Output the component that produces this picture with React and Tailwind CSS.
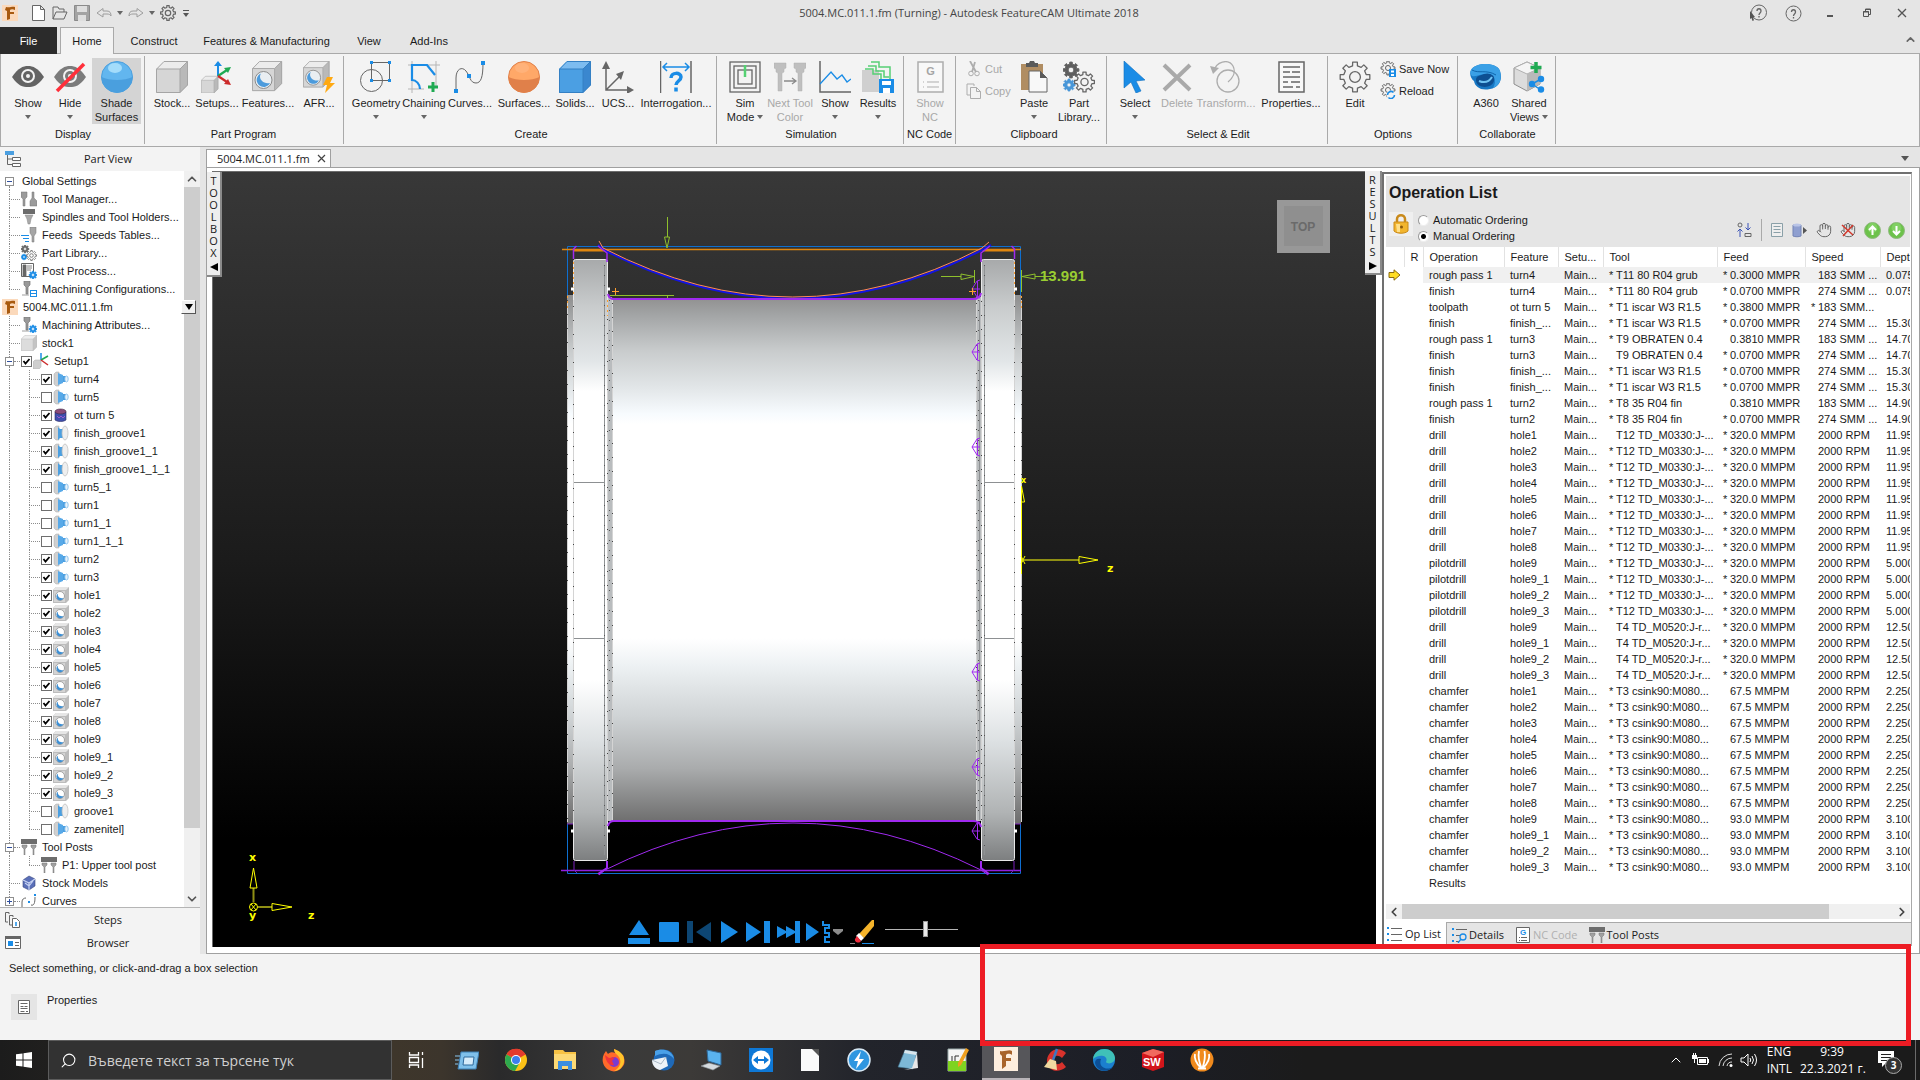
import { ChevronUp, ChevronDown, ChevronLeft, ChevronRight, Search, Hand } from 'lucide-react'
import clsx from 'clsx'

const BLUE = '#1a8ce6'
const GRAY = '#666666'
const PALE = '#adadad'

const Svg = ({ s = 32, w, h, vb, className, children }) => (
  <svg width={w || s} height={h || s} viewBox={vb || `0 0 ${w || s} ${h || s}`} fill="none" className={clsx('block shrink-0', className)}>
    {children}
  </svg>
)

const gear = (cx, cy, outer, inner, teeth = 8) => {
  const pts = []
  for (let i = 0; i < teeth; i++) {
    const a = (i / teeth) * Math.PI * 2 - Math.PI / 2
    const t = Math.PI / teeth
    const corners = [[-0.55, inner], [-0.4, outer], [0.4, outer], [0.55, inner]]
    corners.forEach(([k, r]) => pts.push(`${(cx + Math.cos(a + k * t) * r).toFixed(2)},${(cy + Math.sin(a + k * t) * r).toFixed(2)}`))
  }
  return `M${pts.join('L')}Z`
}

const Gear = ({ cx, cy, r, stroke = GRAY, fill = 'none', hole = 'none', sw = 1.5 }) => (
  <>
    <path d={gear(cx, cy, r, r * 0.76)} stroke={stroke} fill={fill} strokeWidth={sw} strokeLinejoin="round" />
    <circle cx={cx} cy={cy} r={r * 0.36} stroke={stroke} fill={hole} strokeWidth={sw} />
  </>
)

const Caret = () => <Svg w={6} h={4}><path d="M0 0h6L3 4z" fill="#666" /></Svg>

/* ---------- 32px ribbon icons ---------- */

const cube = (front = '#d6d6d6', top = '#ececec', side = '#b9b9b9', edge = '#a5a5a5') => (
  <>
    <path d="M0 8L8 0H32L24 8Z" fill={top} />
    <path d="M24 8L32 0V24L24 32Z" fill={side} />
    <rect y="8" width="24" height="24" fill={front} />
    <path d="M.5 8.200L8 .5H31.500V24L24 31.500H.5ZM.5 8H24V31.500M24 8L31.500 .5" stroke={edge} />
  </>
)

const EyeShape = ({ color }) => (
  <>
    <path d="M0 16C6 7 11 5 16 5s10 2 16 11c-6 9-11 10-16 10S6 25 0 16Z" fill={color} />
    <circle cx="16" cy="15" r="7" fill="#f3f3f3" />
    <circle cx="16" cy="15" r="5" fill={color} />
    <circle cx="16" cy="15" r="2" fill="#f3f3f3" />
  </>
)

const Sphere = ({ base, light, dark }) => (
  <Svg>
    <circle cx="16" cy="16" r="15.500" fill={base} stroke={dark} />
    <path d="M.5 16a15.500 15.500 0 0 0 31 0c-8 4-23 4-31 0Z" fill={dark} />
    <ellipse cx="14" cy="7" rx="7" ry="5" fill={light} />
  </Svg>
)

const HoleCube = () => (
  <>
    <g transform="scale(.94)">{cube()}</g>
    <circle cx="11.500" cy="19" r="8.500" fill="#e9eef2" stroke="#8b8b8b" />
    <path d="M9 12.500c-3 4 1 11 9 9.500a7 7 0 1 1-9-9.500Z" fill="#4c9bdc" />
  </>
)

const Page = ({ color, children }) => (
  <>
    <rect x="4" y="1" width="25" height="30" stroke={color} strokeWidth="1.500" fill="#f8f8f8" />
    {children}
  </>
)

const Tool = ({ x, color }) => (
  <path d={`M${x} 2h12v5l-2 1v3l-2 1v18h-4V12l-2-1V8l-2-1z`} fill={color} stroke="#b0b0b0" strokeWidth=".5" />
)

const icons = {
  eye: <Svg><EyeShape color="#636363" /></Svg>,
  hide: <Svg><EyeShape color="#7b7b7b" /><path d="M30 3L3 30" stroke="#ff2f3a" strokeWidth="3.500" /></Svg>,
  shade: <Sphere base="#62b6ef" light="#a3dcfb" dark="#4a9fde" />,
  stock: <Svg>{cube()}</Svg>,
  setups: (
    <Svg>
      <g transform="translate(0 15) scale(.54)">{cube()}</g>
      <path d="M17 15V3" stroke={BLUE} strokeWidth="2" />
      <path d="M17 15l9-6" stroke="#1faa52" strokeWidth="2.200" />
      <path d="M17 15l9 6" stroke="#cc2b2b" strokeWidth="2.200" />
      <path d="M13 5l4-5 4 5z" fill={BLUE} />
      <path d="M30 6l-7 1 4 5z" fill="#1faa52" />
      <path d="M30 24l-7-1 4-5z" fill="#cc2b2b" />
    </Svg>
  ),
  features: <Svg><HoleCube /></Svg>,
  afr: <Svg><g transform="scale(.88)"><HoleCube /></g><path d="M24 16h6l-3 6h5L22 32l2-8h-4z" fill="#ffa912" /></Svg>,
  geometry: (
    <Svg>
      <circle cx="11.500" cy="19.500" r="11" stroke={GRAY} />
      <path d="M11.500 1.500H29.500V19.500H11.500Z" stroke={GRAY} />
      {[[10, 0], [28, 0], [28, 18], [10, 18]].map(([x, y]) => <rect key={`${x}-${y}`} x={x} y={y} width="3" height="3" fill={BLUE} />)}
    </Svg>
  ),
  chaining: (
    <Svg>
      <path d="M0 4h32M4 0v32M0 28h16M28 0v26" stroke="#b5b5b5" />
      <path d="M12 28c0-5-4-9-8-9V4h15l8 10" stroke={BLUE} strokeWidth="2.200" />
      <path d="M25 21v10M20 26h10" stroke="#1faa52" strokeWidth="3" />
    </Svg>
  ),
  curves: (
    <Svg>
      <path d="M2 30V17C2 8 8 5 12 10s4 12 10 12c5 0 7-6 7-20" stroke={GRAY} />
      <rect x="0" y="28" width="4" height="4" fill={BLUE} />
      <rect x="13" y="13" width="4" height="4" fill={BLUE} />
      <rect x="27" y="0" width="4" height="4" fill={BLUE} />
    </Svg>
  ),
  surfaces: <Sphere base="#ffa868" light="#ffb27a" dark="#e0804a" />,
  solids: <Svg>{cube('#4b9fe3', '#7dbcf0', '#3a87cf', '#3480c4')}</Svg>,
  ucs: (
    <Svg>
      <path d="M4 4v25h25M4 29L19 14" stroke={GRAY} strokeWidth="1.500" />
      <path d="M0 8l4-8 4 8zM25 25l7 4-7 4zM22 10l-8 3 5 6z" fill={GRAY} />
    </Svg>
  ),
  interrogation: (
    <Svg>
      <path d="M.5 0v32M31 0v32" stroke={GRAY} strokeWidth="1.500" />
      <path d="M4 6h24M7 2L3 6l4 4M25 2l4 4-4 4" stroke={BLUE} strokeWidth="1.500" />
      <path d="M11 17c0-6 10-6 10-1 0 4-5 4-5 8M16 26.500v4" stroke={BLUE} strokeWidth="3.500" />
    </Svg>
  ),
  sim: (
    <Svg>
      {[[1, 30], [5, 22], [9, 14]].map(([o, d]) => <rect key={o} x={o} y={o} width={d} height={d} stroke={GRAY} strokeWidth="1.300" />)}
      <path d="M16 4v12" stroke="#55d173" strokeWidth="2.500" />
    </Svg>
  ),
  nextTool: <Svg><Tool x={0} color="#bfbfbf" /><Tool x={20} color="#bfbfbf" /><path d="M10 20h11M18 17l4 3-4 3" stroke="#8b8b8b" strokeWidth="1.300" /></Svg>,
  chart: <Svg><path d="M1 0v31h31" stroke={GRAY} strokeWidth="1.500" /><path d="M1 23L12 11l6 7 5-4 5 7 4-3" stroke={BLUE} strokeWidth="1.300" /></Svg>,
  results: (
    <Svg>
      <rect y="9" width="17" height="22" fill="#cfcfcf" />
      <path d="M3 8h8v5h8v6h5M6 5h8v5h8v6h5M9 1h8v5h11v13M12 13h5" stroke="#57cf76" strokeWidth="1.500" />
      <rect x="17" y="18" width="15" height="14" fill={BLUE} />
      <path d="M20 20h9v4h-9zM21 27h7v5h-7z" fill="#fff" />
    </Svg>
  ),
  nc: (
    <Svg>
      <Page color={PALE}>
        <text x="16.500" y="14" textAnchor="middle" fontSize="11" fontWeight="700" fontFamily="Liberation Sans" fill="#a5a5a5">G</text>
        <path d="M9 21h1M13 21h12M9 26h1M13 26h12" stroke={PALE} />
      </Page>
    </Svg>
  ),
  paste: (
    <Svg w={28} h={32}>
      <path d="M1 3h22v10h-3v16H1z" fill="#b08d62" />
      <path d="M6 4V2h3l1-2h4l1 2h3v4H6z" fill="#5a5a5a" />
      <path d="M9 10h11l7 7v14H9z" fill="#f8f8f8" stroke={GRAY} />
      <path d="M20 10l7 7h-7z" fill="#5a5a5a" />
    </Svg>
  ),
  library: (
    <Svg>
      <Gear cx={8} cy={9} r={8} fill="#5e5e5e" hole="#f3f3f3" sw={1} />
      <Gear cx={6} cy={24} r={6} stroke="#4796d8" fill="#4796d8" hole="#f3f3f3" sw={1} />
      <Gear cx={21.500} cy={21} r={10} sw={1.300} />
    </Svg>
  ),
  select: <Svg><path d="M5 0l21 19-9 1 5 10-5 2-5-11-7 6z" fill={BLUE} stroke="#0f6fc0" strokeWidth=".6" /></Svg>,
  delete: <Svg><path d="M3 4l26 25M29 4L3 29" stroke="#a9a9a9" strokeWidth="4" /></Svg>,
  transform: (
    <Svg>
      <circle cx="18" cy="20" r="11" stroke={PALE} strokeWidth="1.300" />
      <path d="M4 10C6 1 18-3 23 5c3 6 0 12-5 16" stroke={PALE} strokeWidth="1.300" />
      <path d="M0 5l9 2-6 6z" fill={PALE} />
    </Svg>
  ),
  properties: <Svg><Page color={GRAY}><path d="M8 6h17M8 11h7M17 11h8M8 16h17M8 21h5M16 21h9M8 26h10M21 26h4" stroke={GRAY} strokeWidth="1.300" /></Page></Svg>,
  edit: <Svg><Gear cx={16} cy={16} r={15} sw={1.300} /></Svg>,
  a360: (
    <Svg>
      <path d="M1 9C6 1 27 1 30 10c3 9-1 16-10 18C11 30 5 26 4 20 1 18-1 13 1 9Z" fill="#1878c4" />
      <path d="M1 9C6 1 27 1 30 10c2 8 0 14-7 17 5-8 0-15-9-14-6 1-9 3-12 2-2-2-2-4-1-6Z" fill="#3aa0e6" />
      <path d="M6 19c0 9 16 9 18 1 2-6-5-9-10-7-5 2-8 2-8 6Z" fill="#0d4f92" />
      <path d="M9 20c5 2 10 1 13-4" stroke="#6fc2f2" strokeWidth="2" />
      <path d="M2 9c7 4 14-1 24 5" stroke="#0f65ac" />
    </Svg>
  ),
  shared: (
    <Svg>
      <path d="M1 7l13-6 13 6v16l-13 7L1 23z" fill="#dcdcdc" stroke="#8d8d8d" />
      <path d="M1 7l13 6 13-6-13-6z" fill="#f5f5f5" stroke="#b0b0b0" />
      <path d="M14 13v17l13-7V7z" fill="#b9b9b9" />
      <path d="M23 1v11M17.500 6.500h11" stroke="#1faa52" strokeWidth="3.500" />
      <path d="M28 18l-9 5 9 6" stroke={BLUE} strokeWidth="1.500" />
      <circle cx="28" cy="18" r="3.200" fill={BLUE} /><circle cx="19" cy="23" r="3.200" fill={BLUE} /><circle cx="28" cy="28.500" r="3.200" fill={BLUE} />
    </Svg>
  ),
  cut: <Svg s={16}><path d="M4 0l6 11M9 1L6 11" stroke={PALE} strokeWidth="1.800" /><circle cx="5" cy="12.500" r="2.300" stroke={PALE} /><circle cx="11" cy="12.500" r="2.300" stroke={PALE} /></Svg>,
  copy: <Svg s={16}><path d="M8 3V1H1v11h3" stroke={PALE} /><path d="M4.500 4.500h6l4 4v7h-10zM10.500 4.500v4h4" stroke={PALE} /></Svg>,
  saveNow: <Svg s={16}><Gear cx={8} cy={7} r={7} sw={1} /><rect x="9" y="8" width="7" height="8" fill={BLUE} /><path d="M11 9.500h3v2h-3zM11 13h3v2h-3z" fill="#fff" /></Svg>,
  reload: <Svg s={16}><Gear cx={8} cy={7} r={7} sw={1} /><circle cx="11" cy="12" r="4.500" fill="#f3f3f3" /><path d="M7.500 12a3.500 3.500 0 0 1 6-2.500M14.500 12a3.500 3.500 0 0 1-6 2.500" stroke={BLUE} strokeWidth="1.600" /></Svg>
}

/* ---------- 16px tree icons ---------- */

const mini = {
  app: <Svg s={16}><rect width="16" height="16" fill="#fbd9bb" /><path d="M4 2c4 1 6-1 9 0v3c-2-1-4-1-5 0v2h4v2H8v5l-3 1V6L3 5z" fill="#a85a10" /></Svg>,
  tools: <Svg s={16}><path d="M0 1h6v5L4 8v7H2V8L0 6zM11 1h2v6l3 3v5H9v-5l2-3z" fill="#9b9b9b" stroke="#777" strokeWidth=".5" /></Svg>,
  spindle: <Svg s={16}><path d="M2 0h12v5H2z" fill="#6b6b6b" /><path d="M4 6h8l-2 4-1 5H7l-1-5z" fill="#a9a9a9" stroke="#888" strokeWidth=".5" /></Svg>,
  feeds: <Svg s={16}><path d="M0 8.500h8M2 11.500h6M4 14.500h4" stroke={BLUE} /><path d="M9 0h6v6l-2 3v6h-2V9L9 6z" fill="#a5a5a5" stroke="#777" strokeWidth=".5" /></Svg>,
  gears: <Svg s={16}><Gear cx={4} cy={4} r={4} fill="#666" hole="#fff" sw={0.6} /><Gear cx={3} cy={12} r={3} stroke={BLUE} fill={BLUE} hole="#fff" sw={0.5} /><Gear cx={10.500} cy={10.500} r={5} sw={0.8} /></Svg>,
  post: <Svg s={16}><path d="M.5 .5h12v13H.5z" stroke={GRAY} /><path d="M2 2h3v11H2zM6 3h5M6 5h5M6 7h4" fill={GRAY} stroke={GRAY} strokeWidth=".8" /><Gear cx={12} cy={12} r={4} stroke={BLUE} fill={BLUE} hole="#fff" sw={0.6} /></Svg>,
  config: <Svg s={16}><path d="M3 0h6v4L7 6v7H5V6L3 4zM1 14h7" fill="#999" stroke="#777" strokeWidth=".7" /><rect x="9.500" y="9.500" width="6" height="6" fill="#fff" stroke={BLUE} /><path d="M10 12.500h5" stroke={BLUE} /></Svg>,
  attrs: <Svg s={16}><path d="M3 0h6v4L7 6v7H5V6L3 4zM1 14h7" fill="#999" stroke="#777" strokeWidth=".7" /><Gear cx={12} cy={12} r={4} stroke={BLUE} fill={BLUE} hole="#fff" sw={0.6} /></Svg>,
  stock: <Svg s={16} vb="0 0 32 32">{cube('#dcdcdc', '#eeeeee', '#c4c4c4', '#bcbcbc')}</Svg>,
  setup: <Svg s={16}><path d="M0 9l2-2h6v7l-2 2H0z" fill="#cfcfcf" stroke="#aaa" strokeWidth=".5" /><path d="M8 7V0" stroke={BLUE} strokeWidth="1.500" /><path d="M8 7l7-4" stroke="#1faa52" strokeWidth="1.500" /><path d="M8 7l7 5" stroke="#cc2b2b" strokeWidth="1.500" /></Svg>,
  turn: <Svg s={16}><path d="M3 1h3v14H3L1 13V3z" fill="#d0d0d0" stroke="#aaa" strokeWidth=".5" /><path d="M5 2l5 2v8l-5 2z" fill="#58a9e8" /><path d="M10 5h3v6h-3z" fill="#4b9fe0" /><ellipse cx="13.500" cy="8" rx="1.700" ry="3" fill="#e8f3fb" stroke="#7bb9ea" strokeWidth=".8" /></Svg>,
  toolpath: <Svg s={16}><path d="M2 5h11v8c-3 2-8 2-11 0z" fill="#3f4fae" stroke="#2d2d60" strokeWidth=".6" /><ellipse cx="7.500" cy="4.500" rx="5.500" ry="2.500" fill="#8a4a78" stroke="#3b2440" strokeWidth=".6" /><path d="M4 9l2 2 2-2 2 2 2-2" stroke="#9a5bd0" /></Svg>,
  groove: <Svg s={16}><path d="M3 1h3v14H3L1 13V3z" fill="#d0d0d0" stroke="#aaa" strokeWidth=".5" /><path d="M5 2l2 2h4v9H7l-2 2z" fill="#4b9fe0" /><ellipse cx="12" cy="8" rx="3" ry="7" fill="#efefef" stroke="#bbb" strokeWidth=".7" /></Svg>,
  hole: <Svg s={16}><path d="M0 3l3-3h13v13l-3 3H0z" fill="#bcbcbc" /><path d="M0 3l3-3h13l-3 3z" fill="#e6e6e6" /><path d="M1 4h11v11H1z" fill="#d4d4d4" /><circle cx="7" cy="9" r="4.500" fill="#fff" stroke="#8f8f8f" strokeWidth=".8" /><path d="M5 6.500c-1 3 2 5.500 5.500 4.500A3.700 3.700 0 1 1 5 6.500z" fill="#3d8fd3" /></Svg>,
  posts: <Svg s={16}><path d="M0 0h16v5H0z" fill="#6d6d6d" /><path d="M1 6h5v2L4 10v6H3v-6L1 8zM10 6h5v2l-2 2v6h-1v-6l-2-2z" fill="#a0a0a0" stroke="#777" strokeWidth=".5" /></Svg>,
  models: <Svg s={16}><path d="M2 5l6-4 6 3v7l-6 4-6-3z" fill="#5a6fb8" stroke="#37457d" strokeWidth=".6" /><path d="M2 5l6 3 6-4M4 8l4 3 4-5M8 8v7" stroke="#c7d2f2" strokeWidth="1.200" /></Svg>,
  curves: <Svg s={16}><path d="M1 15V9c0-3 2-4 4-4M10 12c3 1 4-2 4-8" stroke={GRAY} /><path d="M7 8h2v2H7zM13 1h2v2h-2z" fill={BLUE} /></Svg>,
  partView: <Svg s={16}><path d="M0 0h9v4H0z" fill="#4b9fe0" /><path d="M2.500 4v9.500H7M2.500 8H7" stroke={GRAY} /><path d="M7.500 6.500h8v3h-8zM7.500 12.500h8v3h-8z" fill="#fff" stroke={GRAY} /></Svg>,
  steps: <Svg s={16}><path d="M4 2V.5H.5V10H3M8 5V3.500H4.500V13H7" stroke={GRAY} /><path d="M7.500 6.500h4l3 3v6h-7z" fill="#fff" stroke={GRAY} /><path d="M11 10v4" stroke={BLUE} strokeWidth="1.500" /></Svg>,
  browser: <Svg s={16}><path d="M.5 1.500h15v12H.5z" fill="#fff" stroke={GRAY} /><path d="M0 1h16v3H0z" fill={GRAY} /><path d="M3 6h5v5H3z" fill={BLUE} /><path d="M10 7.500h4M10 10.500h4" stroke={GRAY} /></Svg>,
  opList: <Svg s={16}><path d="M5 2.500h11M5 8.500h11M5 14.500h11" stroke={GRAY} /><path d="M1 1h2v2H1zM1 7h2v2H1zM1 13h2v2H1z" fill={BLUE} /></Svg>,
  details: <Svg s={16}><path d="M5 2.500h11M5 8.500h5M5 14.500h3" stroke={GRAY} /><path d="M1 1h2v2H1zM1 7h2v2H1zM1 13h2v2H1z" fill={BLUE} /><circle cx="12" cy="10" r="3" stroke={BLUE} strokeWidth="1.300" /><path d="M10 12l-3 4" stroke={BLUE} strokeWidth="1.300" /></Svg>,
  nc: <Svg s={16}><path d="M1.500 .5h13v15h-13z" fill="#fff" stroke={GRAY} /><text x="8" y="8" textAnchor="middle" fontSize="8" fontWeight="700" fontFamily="Liberation Sans" fill={BLUE}>G</text><path d="M4 10.500h1M6 10.500h6M4 13.500h1M6 13.500h6" stroke={GRAY} /></Svg>,
  props: <Svg s={16}><path d="M2.500 1.500h11v13h-11z" fill="#fff" stroke={GRAY} /><path d="M4.500 4.500h7M4.500 7.500h3M8.500 7.500h3M4.500 9.500h7M4.500 12.500h4M10 12.500h2" stroke={GRAY} /></Svg>
}

/* ---------- title bar and ribbon ---------- */

const quick = [
  ['New', 'w-5', <Svg key="n" w={13} h={16}><path d="M.5 .5h8l4 4v11H.5zM8.500 .5v4h4" fill="#fff" stroke={GRAY} /></Svg>],
  ['Open', 'w-6', <Svg key="o" s={16}><path d="M1 14V2h5l1 2h5v3M1 14l3-7h11l-3 7z" stroke={GRAY} /></Svg>],
  ['Save', 'w-5', <Svg key="s" s={16}><path d="M.5 .5h15v15H.5z" fill="#a3a3a3" stroke="#8a8a8a" /><path d="M3 1h10v6H3zM4 10h8v6H4z" fill="#dedede" /></Svg>],
  ['Undo', 'w-6', <Svg key="u" s={16}><path d="M1 8l6-4.500v2.500h4c3 0 4 2 4 5-1-1.500-2-2-4-2H7v3z" stroke="#9d9d9d" /></Svg>],
  ['Undo history', 'w-2', <Caret key="uc" />],
  ['Redo', 'w-6', <Svg key="r" s={16}><path d="M15 8L9 3.500V6H5c-3 0-4 2-4 5 1-1.500 2-2 4-2h4v3z" stroke="#9d9d9d" /></Svg>],
  ['Redo history', 'w-2', <Caret key="rc" />],
  ['Options', 'w-6', <Svg key="g" s={16}><Gear cx={8} cy={8} r={7.500} sw={1.200} /></Svg>],
  ['Customize', 'w-3', <Svg key="c" w={6} h={7}><path d="M0 .5h6" stroke="#555" /><path d="M0 3h6L3 7z" fill="#555" /></Svg>]
]

const tabs = [
  ['Construct', 'w-20'],
  ['Features & Manufacturing', 'w-[145px]'],
  ['View', 'w-[60px]'],
  ['Add-Ins', 'w-[60px]']
]

const groups = [
  { name: 'Display', w: 'w-[144px] pl-[5px]', items: [
    ['Show', 'w-11', 'eye', { caret: true }],
    ['Hide', 'w-10', 'hide', { caret: true }],
    ['Shade Surfaces', 'w-[49px] ml-[2px] bg-[#d4d4d4]', 'shade']
  ] },
  { name: 'Part Program', w: 'w-[199px] pl-[3px]', items: [
    ['Stock...', 'w-12', 'stock'], ['Setups...', 'w-[42px]', 'setups'], ['Features...', 'w-[60px]', 'features'], ['AFR...', 'w-[42px]', 'afr']
  ] },
  { name: 'Create', w: 'w-[373px] pl-[6px]', items: [
    ['Geometry', 'w-[52px]', 'geometry', { caret: true }],
    ['Chaining', 'w-11', 'chaining', { caret: true }],
    ['Curves...', 'w-12', 'curves'], ['Surfaces...', 'w-[60px]', 'surfaces'], ['Solids...', 'w-[42px]', 'solids'],
    ['UCS...', 'w-11', 'ucs'], ['Interrogation...', 'w-[72px]', 'interrogation']
  ] },
  { name: 'Simulation', w: 'w-[187px] pl-[6px]', items: [
    ['Sim Mode', 'w-11', 'sim', { inline: true }],
    ['Next Tool Color', 'w-[46px]', 'nextTool', { off: true }],
    ['Show', 'w-11', 'chart', { caret: true }],
    ['Results', 'w-[42px]', 'results', { caret: true }]
  ] },
  { name: 'NC Code', w: 'w-[52px] pl-[3px]', items: [['Show NC', 'w-[46px]', 'nc', { off: true }]] },
  { name: 'Clipboard', w: 'w-[151px] pl-[10px]', small: [['Cut', 'cut', true], ['Copy', 'copy', true]], smallW: 'w-12', items: [
    ['Paste', 'w-10', 'paste', { caret: true }], ['Part Library...', 'w-[50px]', 'library']
  ] },
  { name: 'Select & Edit', w: 'w-[221px] pl-[6px]', items: [
    ['Select', 'w-11', 'select', { caret: true }], ['Delete', 'w-10', 'delete', { off: true }],
    ['Transform...', 'w-[58px]', 'transform', { off: true }], ['Properties...', 'w-[72px]', 'properties']
  ] },
  { name: 'Options', w: 'w-[130px] pl-[5px]', items: [['Edit', 'w-11', 'edit']], after: [['Save Now', 'saveNow'], ['Reload', 'reload']] },
  { name: 'Collaborate', w: 'w-[98px] pl-[6px]', items: [['A360', 'w-11', 'a360'], ['Shared Views', 'w-[42px]', 'shared', { inline: true }]] }
]

function RibbonButton({ label, w, icon, opt = {} }) {
  const words = label.split(' ')
  const last = words.length > 1 ? words.pop() : null
  return (
    <button disabled={opt.off} className={clsx('flex h-[66px] shrink-0 flex-col items-center pt-[3px]', w, opt.off ? 'text-[#a8a8a8]' : 'text-[#1e1e1e]')}>
      {icons[icon]}
      <span className="mt-[3px] flex h-[14px] items-center whitespace-nowrap">{words.join(' ')}</span>
      <span className="flex h-[14px] items-center gap-[3px] whitespace-nowrap">
        {last}
        {(opt.caret || opt.inline) && <Caret />}
      </span>
    </button>
  )
}

function SmallButtons({ list, className }) {
  return (
    <div className={clsx('flex flex-col gap-[6px] pt-[3px]', className)}>
      {list.map(([label, icon, off]) => (
        <button key={label} disabled={off} className={clsx('flex h-4 items-center gap-[3px] whitespace-nowrap', off ? 'text-[#a8a8a8]' : 'text-[#1e1e1e]')}>
          {icons[icon]}
          {label}
        </button>
      ))}
    </div>
  )
}

function TitleBar() {
  return (
    <header className="flex h-[26px] shrink-0 items-center justify-between">
      <div className="flex flex-1 items-center">
        <span className="mr-[10px] ml-[2px]">{mini.app}</span>
        {quick.map(([label, w, icon]) => (
          <button key={label} aria-label={label} className={clsx('flex items-center justify-center', w)}>{icon}</button>
        ))}
      </div>
      <h1 className="ml-[18px] font-['Open_Sans','Noto_Sans',sans-serif] text-[11px] text-[#444]">5004.MC.011.1.fm (Turning) - Autodesk FeatureCAM Ultimate 2018</h1>
      <div className="flex flex-1 items-center justify-end text-[#666]">
        <button aria-label="Context help" className="w-9">
          <Svg w={18} h={18}><circle cx="10" cy="8.500" r="7.500" stroke={GRAY} /><path d="M8 7c0-3 4-3 4 0 0 2-2 2-2 4M10 12v1.500" stroke={GRAY} strokeWidth="1.300" /><path d="M1 7l5 6-2 .3 1 3-1.500.6-1-3L1 15z" fill="#555" /></Svg>
        </button>
        <button aria-label="Help" className="w-10">
          <Svg s={17}><circle cx="8.500" cy="8.500" r="7.500" stroke={GRAY} /><path d="M6.500 7c0-3 4-3 4 0 0 2-2 2-2 4M8.500 12v1.500" stroke={GRAY} strokeWidth="1.300" /></Svg>
        </button>
        <button aria-label="Minimize" className="w-9"><Svg s={12}><path d="M2 9h6" stroke="#555" strokeWidth="2" /></Svg></button>
        <button aria-label="Restore" className="w-9"><Svg s={12}><path d="M2.500 4.500h5v5h-5zM4.500 4V2h5v5.500H8" stroke="#555" /><path d="M2 5h6M4 2.500h6" stroke="#555" /></Svg></button>
        <button aria-label="Close" className="w-[23px]"><Svg s={12}><path d="M1 2l8 8M9 2l-8 8" stroke="#555" strokeWidth="1.300" /></Svg></button>
      </div>
    </header>
  )
}

function Ribbon() {
  return (
    <>
      <nav className="relative z-10 -mb-px flex h-7 shrink-0 items-end">
        <button className="mr-[3px] h-[27px] w-[57px] bg-[#2b2b2b] text-white">File</button>
        <button className="h-[27px] w-[54px] border border-b-0 border-[#a9a9a9] bg-[#f3f3f3]">Home</button>
        {tabs.map(([label, w]) => (
          <button key={label} className={clsx('h-[27px] whitespace-nowrap', w)}>{label}</button>
        ))}
        <button aria-label="Collapse ribbon" className="mr-[3px] mb-2 ml-auto"><ChevronUp size={13} strokeWidth={3} color="#666" /></button>
      </nav>
      <section className="flex h-[94px] shrink-0 border border-[#a9a9a9] bg-[#f3f3f3] pt-[2px]">
        {groups.map((g) => (
          <div key={g.name} className={clsx('flex h-[88px] shrink-0 flex-col border-r border-[#a9a9a9] pt-[2px]', g.w)}>
            <div className="flex">
              {g.small && <SmallButtons list={g.small} className={g.smallW} />}
              {g.items.map(([label, w, icon, opt]) => <RibbonButton key={label} label={label} w={w} icon={icon} opt={opt} />)}
              {g.after && <SmallButtons list={g.after} className="ml-[3px]" />}
            </div>
            <div className="pt-[3px] pr-1 text-center whitespace-nowrap">{g.name}</div>
          </div>
        ))}
      </section>
    </>
  )
}

/* ---------- part view ---------- */

const child = (text, icon, on) => ({ text, icon, on, level: 2 })
const tree = [
  { text: 'Global Settings', level: 0, open: true },
  { text: 'Tool Manager...', icon: 'tools', level: 1 },
  { text: 'Spindles and Tool Holders...', icon: 'spindle', level: 1 },
  { text: 'Feeds  Speeds Tables...', icon: 'feeds', level: 1 },
  { text: 'Part Library...', icon: 'gears', level: 1 },
  { text: 'Post Process...', icon: 'post', level: 1 },
  { text: 'Machining Configurations...', icon: 'config', level: 1, last: true },
  { text: '5004.MC.011.1.fm', icon: 'app', root: true },
  { text: 'Machining Attributes...', icon: 'attrs', level: 1 },
  { text: 'stock1', icon: 'stock', level: 1 },
  { text: 'Setup1', icon: 'setup', level: 1, open: true, on: true },
  child('turn4', 'turn', true),
  child('turn5', 'turn', false),
  child('ot turn 5', 'toolpath', true),
  child('finish_groove1', 'groove', true),
  child('finish_groove1_1', 'groove', true),
  child('finish_groove1_1_1', 'groove', true),
  child('turn5_1', 'turn', false),
  child('turn1', 'turn', false),
  child('turn1_1', 'turn', false),
  child('turn1_1_1', 'turn', false),
  child('turn2', 'turn', true),
  child('turn3', 'turn', true),
  ...['hole1', 'hole2', 'hole3', 'hole4', 'hole5', 'hole6', 'hole7', 'hole8', 'hole9', 'hole9_1', 'hole9_2', 'hole9_3'].map((n) => child(n, 'hole', true)),
  child('groove1', 'groove', false),
  { ...child('zamenitel]', 'turn', false), last: true },
  { text: 'Tool Posts', icon: 'posts', level: 1, open: true },
  { text: 'P1: Upper tool post', icon: 'posts', level: 2, last: true },
  { text: 'Stock Models', icon: 'models', level: 1 },
  { text: 'Curves', icon: 'curves', level: 1, open: false }
]

const Guide = ({ branch, last }) => (
  <span className="ml-[9px] flex h-full w-[11px] shrink-0 flex-col">
    <span className="h-[9px] w-full border-l border-dotted border-[#8c8c8c]" />
    <span className={clsx('h-[9px] w-full', !last && 'border-l border-dotted border-[#8c8c8c]', branch && 'border-t border-t-[#8c8c8c] [border-top-style:dotted]')} />
  </span>
)

const Expander = ({ open, first, label }) => (
  <span className="flex h-full w-5 shrink-0">
    <span className="ml-[5px] flex h-full w-[9px] flex-col items-center">
      <span className={clsx('w-px flex-1', !first && 'border-l border-dotted border-[#8c8c8c]')} />
      <button aria-label={`Toggle ${label}`} className="flex size-[9px] items-center justify-center border border-[#8f8f8f] bg-white">
        <svg width="5" height="5" className="block"><path d={open ? 'M0 2.500h5' : 'M0 2.500h5M2.500 0v5'} stroke="#2f4f9e" /></svg>
      </button>
      <span className={clsx('w-px flex-1', open && 'border-l border-dotted border-[#8c8c8c]')} />
    </span>
    {!first && <span className="mt-[9px] w-[6px] border-t border-dotted border-[#8c8c8c]" />}
  </span>
)

const Check = ({ id, on }) => (
  <span className="mr-px grid shrink-0">
    <input id={id} type="checkbox" defaultChecked={on} className="peer col-start-1 row-start-1 size-[11px] appearance-none border border-[#6f6f6f] bg-white" />
    <svg width="11" height="11" className="pointer-events-none invisible col-start-1 row-start-1 peer-checked:visible"><path d="M2.500 5l2 2.500L8.500 3" stroke="#000" strokeWidth="1.800" fill="none" /></svg>
  </span>
)

function TreeRow({ row, index }) {
  const { text, icon, on, level, open, last, root } = row
  const id = `node-${index}`
  const Text = on === undefined ? 'span' : 'label'
  return (
    <li className="flex h-[18px] shrink-0 items-center whitespace-pre">
      {level === 2 && <Guide />}
      {open !== undefined ? <Expander open={open} first={level === 0} label={text} /> : root ? <span className="w-[2px]" /> : <Guide branch last={last} />}
      {on !== undefined && <span className="ml-px"><Check id={id} on={on} /></span>}
      {icon && <span className={on === undefined && !root ? 'ml-px' : ''}>{mini[icon]}</span>}
      <Text htmlFor={on === undefined ? undefined : id} className={clsx(level === 0 ? 'ml-[2px]' : 'ml-[5px]')}>{text}</Text>
    </li>
  )
}

function PartView() {
  return (
    <aside className="flex w-[200px] shrink-0 flex-col bg-[#f3f3f3]">
      <div className="flex h-6 shrink-0 items-center px-[5px] font-['Open_Sans',sans-serif]">
        {mini.partView}
        <h2 className="flex-1 text-center">Part View</h2>
      </div>
      <div className="relative flex min-h-0 flex-1 overflow-hidden border-b border-[#b5b5b5] bg-white pt-px">
        <ul className="flex-1">
          {tree.map((row, i) => <TreeRow key={i} row={row} index={i} />)}
        </ul>
        <div className="absolute top-0 right-0 flex h-full w-4 flex-col items-center bg-[#f0f0f0]">
          <ChevronUp size={14} strokeWidth={3} color="#555" className="my-px shrink-0" />
          <div className="flex w-full flex-1 flex-col">
            <div className="flex-[641] bg-[#cdcdcd]" />
            <div className="flex-[63]" />
          </div>
          <ChevronDown size={14} strokeWidth={3} color="#555" className="my-px shrink-0" />
        </div>
        {/* reaches over the scroll bar */}
        <button aria-label="File menu" className="absolute top-[129px] right-[4px] flex h-[14px] w-[15px] items-center justify-center border border-white border-r-[#555] border-b-[#555] bg-[#f0f0f0]">
          <Svg w={8} h={6}><path d="M0 0h8L4 6z" fill="#000" /></Svg>
        </button>
      </div>
      {[['Steps', 'steps'], ['Browser', 'browser']].map(([label, icon]) => (
        <button key={label} className="flex h-[23px] shrink-0 items-center px-[5px] font-['Open_Sans',sans-serif]">
          {mini[icon]}
          <span className="flex-1">{label}</span>
        </button>
      ))}
    </aside>
  )
}

/* ---------- 3D canvas ---------- */

const SIDE_X = [567, 573, 607, 612, 976, 981, 1014, 1021]

function Scene() {
  return (
    <svg viewBox="213 172 1163 775" fill="none" className="block h-full w-full" fontFamily="DejaVu Sans, sans-serif" fontWeight="700">
      <defs>
        <linearGradient id="body" x1="0" y1="299" x2="0" y2="821" gradientUnits="userSpaceOnUse">
          <stop offset="0" stopColor="#929292" /><stop offset=".03" stopColor="#a2a4a5" /><stop offset=".1" stopColor="#c9cccd" />
          <stop offset=".17" stopColor="#e2e6e8" /><stop offset=".22" stopColor="#f7fbfe" /><stop offset=".24" stopColor="#fff" />
          <stop offset=".65" stopColor="#fff" /><stop offset=".7" stopColor="#eef2f4" /><stop offset=".8" stopColor="#cfd3d5" />
          <stop offset=".9" stopColor="#a9abac" /><stop offset="1" stopColor="#6f6f6f" />
        </linearGradient>
        <linearGradient id="flange" x1="0" y1="259" x2="0" y2="861" gradientUnits="userSpaceOnUse">
          <stop offset="0" stopColor="#a7a9aa" /><stop offset=".08" stopColor="#c9cccd" /><stop offset=".17" stopColor="#e2e6e8" />
          <stop offset=".22" stopColor="#fff" /><stop offset=".7" stopColor="#fff" /><stop offset=".8" stopColor="#dde1e3" />
          <stop offset=".92" stopColor="#b0b3b4" /><stop offset="1" stopColor="#7c7e7f" />
        </linearGradient>
      </defs>

      <rect x="567" y="295" width="7" height="529" fill="url(#body)" />
      <rect x="1014" y="295" width="7" height="529" fill="url(#body)" />
      <rect x="604" y="297" width="8" height="524" fill="#b9bcbe" />
      <rect x="976" y="297" width="8" height="524" fill="#b9bcbe" />
      <rect x="612" y="299" width="364" height="522" fill="url(#body)" />
      <rect x="573.500" y="259.500" width="34" height="601" rx="2" fill="url(#flange)" stroke="#e8e8e8" />
      <rect x="981.500" y="259.500" width="33" height="601" rx="2" fill="url(#flange)" stroke="#e8e8e8" />
      <path d="M574 482.500h31M984 482.500h30M574 638.500h31M984 638.500h30" stroke="#8d9092" />
      <path d="M604.500 265v590M984.500 265v590M607.500 300v520M979.500 300v520" stroke="#8f9294" />
      {SIDE_X.map((x) => <path key={x} d={`M${x}.5 300V822`} stroke="#d4d4d4" />)}
      {SIDE_X.map((x) => <path key={x} d={`M${x}.5 ${300 + (x % 7)}V822`} stroke="#444" strokeDasharray="1 13" />)}
      <path d="M604.500 265V855M609.500 300V820M978.500 300V820M984.500 265V855" stroke="#555" strokeDasharray="1 9" />
      <path d="M573.500 262v34M607.500 300v16M1014.500 262v34M567.500 296v12M1021.500 296v12" stroke="#ffa030" strokeDasharray="2 3" />

      {/* stock boundary */}
      <path d="M567.500 295V246.500H1020.500V295M567.500 824V873.500H1020.500V824" stroke="#0e6fd0" />
      <path d="M562 249.500H1021" stroke="#e0860e" strokeWidth="1.500" />
      <path d="M574 250.500h34M982 250.500h33" stroke="#e0860e" strokeWidth="2" />
      <path d="M561 870.500H1021" stroke="#8f1fe0" strokeWidth="1.500" />

      <path d="M598 245L606 251Q793 346 980 251L991 245" stroke="#1414e0" strokeWidth="2" />
      <path d="M599 241L603 248Q793 346 982 248L989 242" stroke="#ff8a5a" />
      <path d="M599 875L605 870Q793 776 981 870L988 875" stroke="#a02af0" />

      <path d="M573.500 259V249l3-3M607 262V253l-9-7M981 262v-9l9-7M1014.500 259V249l-3-3" stroke="#a02af0" strokeWidth="1.500" />
      <path d="M608 294q1 5 6 5H973q7 0 8-6" stroke="#a02af0" strokeWidth="2" />
      <path d="M607 861v7l-9 6M608 826q1-5 6-5H973q7 0 8 6M981 861v7l8 6" stroke="#a02af0" strokeWidth="2" />
      <path d="M574 861v9l3 3M1014 861v9l-3 3M567 824h6M1015 824h6" stroke="#7a1fb8" />
      {[289, 352, 447, 672, 767, 831].map((y) => (
        <path key={y} d={`M980 ${y - 9}l-3 1-5 8 5 8 3 1M972 ${y}h8M977.500 ${y - 8}v16`} stroke="#a02af0" />
      ))}
      <path d="M612 291.500h7M615.500 288v7M969 291.500h7M972.500 288v7" stroke="#ffa030" />
      <path d="M571 289h3M607 289h3M1014 289h3M571 831h3M607 831h3M1014 831h3" stroke="#fff" strokeWidth="3" />

      {/* dimensions */}
      <g stroke="#8fc02c">
        <path d="M667.500 217V237M664.500 237h5l-2.500 11zM610 295.500H674M667.500 295v3" />
        <path d="M941 276.500h20M961 274l13 2.500-13 3zM974.500 270v13" />
        <path d="M1021.500 270v22M1022 276.500l13-2.500v5zM1035 276.500h16" />
      </g>
      <text x="1040" y="281" fontSize="15" fontFamily="Liberation Sans" fill="#9acd32">13.991</text>

      {/* axes */}
      <g stroke="#ffff00" fontSize="11">
        <path d="M1024 560H1079M253.500 888V902M258 907H272" stroke="#8f8f14" strokeWidth="2" />
        <path d="M1079 556.500l19 3.500-19 3.500zM1021.500 486V574M1021.500 486l3 16h-3M1021 556l4 8M1025 556l-4 8" />
        <path d="M250 888l3.500-20 3.500 20zM272 903.500l20 3.500-20 3.500z" />
        <circle cx="253.500" cy="907" r="4" /><path d="M251 904l5 6M256 904l-5 6" />
        <g fill="#ffff00" stroke="none">
          <text x="1107" y="572">z</text>
          <text x="1021" y="483" fontSize="8">x</text>
          <text x="249" y="861">x</text>
          <text x="249" y="919">y</text>
          <text x="308" y="919">z</text>
        </g>
      </g>

      <g>
        <rect x="1277" y="200" width="53" height="53" fill="#989898" />
        <rect x="1284" y="206" width="39" height="40" fill="#8f8f8f" />
        <text x="1303" y="231" textAnchor="middle" fontSize="12" fontFamily="Liberation Sans" fill="#6a6a6a">TOP</text>
      </g>
    </svg>
  )
}

const player = [
  ['Eject', 'w-6', <path key="p" d="M1 15L11 0l10 15zM0 18h22v6H0z" />],
  ['Stop', 'w-[22px]', <rect key="p" x="1" y="2" width="20" height="20" rx="1" />],
  ['Previous', 'w-7', <path key="p" d="M1 1h6v22H1zM25 2v20L10 12z" opacity=".5" />],
  ['Play', 'w-5', <path key="p" d="M1 1l17 11L1 23z" />],
  ['Next', 'w-6', <path key="p" d="M0 2l15 10L0 22zM18 1h6v22h-6z" />],
  ['Fast forward', 'w-6', <path key="p" d="M1 6l9 5V6l9 5V1h6v22h-6V13l-9 5v-5l-9 5z" />],
  ['Step', 'w-6', <path key="p" d="M0 3l13 9L0 21zM16 1h2v3h6v5h-4v3h4v6h-4v3h4v2h-6v-7h4v-2h-4V7h4V6h-6z" />]
]

function Player() {
  return (
    <div className="absolute bottom-[3px] left-1/2 ml-[-167px] flex items-start text-[#1a8ce6]">
      <div className="flex gap-[6px]">
        {player.map(([label, w, shape]) => (
          <button key={label} aria-label={label} className={clsx('h-6', w)}>
            <svg height="24" className="block w-full" fill="currentColor">{shape}</svg>
          </button>
        ))}
      </div>
      <button aria-label="Step options" className="mt-[9px] ml-[3px]"><Svg w={10} h={6}><path d="M0 0h10v2L5 6 0 2z" fill="#8c8c8c" /></Svg></button>
      <button aria-label="Clear" className="ml-[7px]">
        <Svg w={25} h={24}><path d="M0 23.500h5" stroke="#888" /><path d="M12 23.500h12" stroke={BLUE} /><path d="M24 0v6L14 18l-5-4L22 0z" fill="#f4b32a" /><path d="M9 13l5 5-3 3-5-5z" fill="#fff" /><path d="M7 16l4 5c-2 3-7 1-6-2z" fill="#ee2b3b" /></Svg>
      </button>
      <input type="range" aria-label="Speed" defaultValue="57" className="mt-[1px] ml-[10px] h-4 w-[73px] appearance-none bg-[linear-gradient(#b5b5b5,#b5b5b5)] bg-[length:100%_1px] bg-center bg-no-repeat [&::-webkit-slider-thumb]:h-4 [&::-webkit-slider-thumb]:w-[5px] [&::-webkit-slider-thumb]:appearance-none [&::-webkit-slider-thumb]:border [&::-webkit-slider-thumb]:border-[#999] [&::-webkit-slider-thumb]:bg-[#e8e8e8]" />
    </div>
  )
}

const SideTab = ({ word, className, left }) => (
  <button className={clsx("absolute flex flex-col items-center border-r-2 border-b-2 border-[#8a8a8a] bg-[#eeeeee] pt-[3px] font-['Open_Sans',sans-serif]", className)}>
    {word.split('').map((c, i) => <span key={i} className="h-3 leading-3">{c}</span>)}
    <span className="pt-1"><Svg w={8} h={8}><path d={left ? 'M8 0v8L0 4z' : 'M0 0l8 4-8 4z'} fill="#000" /></Svg></span>
  </button>
)

/* ---------- operation list ---------- */

const T12 = 'T12 TD_M0330:J-...'
const T4 = 'T4 TD_M0520:J-r...'
const nine = ['hole9', 'hole9_1', 'hole9_2', 'hole9_3']
const eight = [1, 2, 3, 4, 5, 6, 7, 8].map((n) => `hole${n}`)
const ops = [
  ['rough pass 1', 'turn4', '*T11 80 R04 grub', '*0.3000 MMPR', '183 SMM ...', '0.075'],
  ['finish', 'turn4', '*T11 80 R04 grub', '*0.0700 MMPR', '274 SMM ...', '0.075'],
  ['toolpath', 'ot turn 5', '*T1 iscar W3 R1.5', '*0.3800 MMPR', '*183 SMM...', ''],
  ['finish', 'finish_...', '*T1 iscar W3 R1.5', '*0.0700 MMPR', '274 SMM ...', '15.300'],
  ['rough pass 1', 'turn3', '*T9 OBRATEN 0.4', '0.3810 MMPR', '183 SMM ...', '14.700'],
  ['finish', 'turn3', 'T9 OBRATEN 0.4', '*0.0700 MMPR', '274 SMM ...', '14.700'],
  ['finish', 'finish_...', '*T1 iscar W3 R1.5', '*0.0700 MMPR', '274 SMM ...', '15.300'],
  ['finish', 'finish_...', '*T1 iscar W3 R1.5', '*0.0700 MMPR', '274 SMM ...', '15.300'],
  ['rough pass 1', 'turn2', '*T8 35 R04 fin', '0.3810 MMPR', '183 SMM ...', '14.900'],
  ['finish', 'turn2', '*T8 35 R04 fin', '*0.0700 MMPR', '274 SMM ...', '14.900'],
  ...eight.map((h, i) => ['drill', h, (i ? '*' : '') + T12, '*320.0 MMPM', '2000 RPM', '11.950']),
  ...nine.map((h) => ['pilotdrill', h, '*' + T12, '*320.0 MMPM', '2000 RPM', '5.000']),
  ...nine.map((h) => ['drill', h, T4, '*320.0 MMPM', '2000 RPM', '12.500']),
  ...eight.map((h) => ['chamfer', h, '*T3 csink90:M080...', '67.5 MMPM', '2000 RPM', '2.250']),
  ...nine.map((h) => ['chamfer', h, '*T3 csink90:M080...', '93.0 MMPM', '2000 RPM', '3.100'])
]

const Starred = ({ v }) => (
  <>
    <span className="inline-block w-[7px]">{v[0] === '*' ? '*' : ''}</span>
    {v.replace('*', '')}
  </>
)

const Round = ({ d }) => (
  <Svg s={17}><circle cx="8.500" cy="8.500" r="8" fill="#6cc24a" stroke="#8fb97e" /><circle cx="8.500" cy="6" r="5" fill="#8ed873" opacity=".6" /><path d={d} stroke="#fff" strokeWidth="2" /></Svg>
)

const opTools = [
  ['Sort', 'mr-[9px]', <Svg key="i" s={16}><circle cx="4" cy="3" r="2" stroke="#666" /><path d="M4 15V7M1.500 9.500L4 7l2.500 2.500M12 1v7M9.500 5.500L12 8l2.500-2.500" stroke="#3b52b5" /><path d="M9 11.500h6v3H9z" stroke="#666" /></Svg>],
  ['Properties', 'border-l border-[#a9a9a9] pl-[7px] h-[22px]', <Svg key="i" s={16}><path d="M2.500 1.500h11v13h-11z" fill="#eee" stroke="#8aa0a8" /><path d="M4.500 4.500h7M4.500 7.500h7M4.500 10.500h7" stroke="#8aa0a8" /></Svg>],
  ['Stock', 'ml-[7px]', <Svg key="i" s={16}><path d="M1 3h8v11c-2 1-6 1-8 0z" fill="#8f9fd0" stroke="#7383b5" /><ellipse cx="5" cy="3" rx="4" ry="1.500" fill="#b9c4e6" /><path d="M11 5l4 3.500-4 3.500z" fill="#555" /></Svg>],
  ['Hold', 'ml-[8px]', <Hand key="i" size={16} strokeWidth={1.5} color="#666" />],
  ['Release', 'ml-[8px]', <span key="i" className="grid"><Hand size={16} strokeWidth={1.5} color="#666" className="col-start-1 row-start-1" /><Svg s={16} className="col-start-1 row-start-1"><path d="M2 3l11 10M13 3L3 14" stroke="#d23a2e" strokeWidth="1.500" /></Svg></span>],
  ['Move up', 'ml-[8px]', <Round key="i" d="M8.500 13V5M5 8l3.500-3.500L12 8" />],
  ['Move down', 'ml-[7px]', <Round key="i" d="M8.500 4v8M5 9l3.500 3.500L12 9" />]
]

const Radio = ({ id, label, on }) => (
  <div className="flex h-4 items-center gap-[4px]">
    <input id={id} type="radio" name="ordering" defaultChecked={on} className="size-[11px] appearance-none rounded-full border border-[#999] border-r-[#eee] border-b-[#eee] bg-white checked:bg-[radial-gradient(circle,#000_2px,#fff_3px)]" />
    <label htmlFor={id}>{label}</label>
  </div>
)

const bottomTabs = [['Op List', 'opList'], ['Details', 'details'], ['NC Code', 'nc'], ['Tool Posts', 'posts']]

function OperationList() {
  const cell = 'overflow-hidden p-0 pl-[6px] text-left font-normal whitespace-nowrap'
  return (
    <section className="mt-px mr-[7px] mb-[7px] flex w-[530px] shrink-0 flex-col border-t-2 border-r border-l-2 border-[#707070] border-r-[#a9a9a9] bg-white">
      <div className="mr-px ml-[2px] mt-[2px] flex h-[71px] shrink-0 flex-col bg-[#e5e5e5] pr-[5px] pl-[3px]">
        <h2 className="h-[35px] pt-px text-[16px] leading-8 font-bold">Operation List</h2>
        <div className="flex items-start">
          <button aria-label="Lock order" className="mt-px mr-[5px] flex size-6 items-center justify-center bg-[#efefef]">
            <Svg w={16} h={20}><path d="M4 9V5c0-5 8-5 8 0v4" stroke="#c98a1b" strokeWidth="2.500" /><path d="M1 8h14v9c-3 3-11 3-14 0z" fill="#f2b52e" stroke="#c98a1b" /><path d="M3 10h4v8H4z" fill="#ffe08a" /><circle cx="8.500" cy="13" r="1.500" fill="#8a5a10" /></Svg>
          </button>
          <div className="flex flex-col pt-px">
            <Radio id="auto" label="Automatic Ordering" />
            <Radio id="manual" label="Manual Ordering" on />
          </div>
          <div className="mt-[8px] ml-auto flex items-center">
            {opTools.map(([label, c, icon]) => <button key={label} aria-label={label} className={clsx('flex items-center', c)}>{icon}</button>)}
          </div>
        </div>
      </div>

      <div className="mr-px ml-[2px] min-h-0 flex-1 overflow-hidden">
        <table className="w-full table-fixed border-collapse">
          <colgroup>
            <col className="w-[18px]" /><col className="w-[19px]" /><col className="w-[81px]" /><col className="w-[54px]" /><col className="w-[45px]" />
            <col className="w-[114px]" /><col className="w-[88px]" /><col className="w-[75px]" /><col />
          </colgroup>
          <thead>
            <tr className="h-5">
              {['', 'R', 'Operation', 'Feature', 'Setu...', 'Tool', 'Feed', 'Speed', 'Depth'].map((h, i) => (
                <th key={i} className={clsx(cell, i < 8 && 'border-r border-[#e2e2e2]')}>{h}</th>
              ))}
            </tr>
          </thead>
          <tbody>
            {ops.map(([op, feature, tool, feed, speed, depth], i) => (
              <tr key={i} className="h-4 leading-4">
                <td className="p-0 pl-[2px]">
                  {i === 0 && <Svg w={13} h={12}><path d="M1 3.500h5V.8L12 6l-6 5.200V8.500H1z" fill="#ffdd22" stroke="#8a6a10" /></Svg>}
                </td>
                <td className="p-0" />
                {[op, feature, 'Main...'].map((v, k) => <td key={k} className={clsx(cell, i === 0 && 'bg-[#f0f0f0]')}>{v}</td>)}
                {[tool, feed, speed].map((v, k) => <td key={k} className={clsx(cell, i === 0 && 'bg-[#f0f0f0]')}><Starred v={v} /></td>)}
                <td className={clsx(cell, i === 0 && 'bg-[#f0f0f0]')}>{depth}</td>
              </tr>
            ))}
            <tr className="h-4 leading-4"><td /><td /><td className={cell}>Results</td></tr>
          </tbody>
        </table>
      </div>

      <div className="mr-px ml-[2px] flex h-[15px] shrink-0 items-center bg-[#f0f0f0]">
        <ChevronLeft size={14} strokeWidth={3} color="#444" className="mx-px shrink-0" />
        <div className="flex h-full flex-1"><div className="flex-[432] bg-[#cdcdcd]" /><div className="flex-[66]" /></div>
        <ChevronRight size={14} strokeWidth={3} color="#444" className="mx-px shrink-0" />
      </div>
      <div className="mt-[3px] flex h-6 shrink-0 bg-[#e5e5e5] font-['Open_Sans',sans-serif]">
        {bottomTabs.map(([label, icon], i) => (
          <button key={label} disabled={i === 2} className={clsx('flex h-full items-center whitespace-nowrap', i === 0 ? 'w-[63px] gap-[3px] border-r border-[#a9a9a9] bg-white pl-[2px]' : 'gap-[2px] border-t border-[#a9a9a9] pr-[7px] pl-1', i === 2 && 'text-[#b0b0b0]')}>
            {mini[icon]}
            {label}
          </button>
        ))}
        <span className="flex-1 border-t border-[#a9a9a9]" />
      </div>
    </section>
  )
}

function Workspace() {
  return (
    <main className="ml-[6px] flex min-w-0 flex-1 flex-col">
      <div className="flex h-5 shrink-0 items-end justify-between">
        <div className="flex h-[18px] w-[125px] items-center justify-between border border-b-0 border-[#a0a0a0] bg-white pr-1 pl-[10px] font-['Open_Sans',sans-serif]">
          <span>5004.MC.011.1.fm</span>
          <button aria-label="Close document"><Svg s={9}><path d="M1 1l7 7M8 1L1 8" stroke="#444" strokeWidth="1.200" /></Svg></button>
        </div>
        <button aria-label="Document list" className="mr-[11px] mb-[6px]"><Svg w={8} h={5}><path d="M0 0h8L4 5z" fill="#555" /></Svg></button>
      </div>
      <div className="flex min-h-0 flex-1 border border-[#a0a0a0] bg-white pt-[3px]">
        <div className="relative min-w-0 flex-1 pr-[6px] pb-[6px] pl-[5px]">
          <div className="relative h-full border-t border-l border-[#6d6d6d] bg-[linear-gradient(#383838,#1b1b1b_50%,#000_86%)]">
            <Scene />
            <Player />
          </div>
          <SideTab word="TOOLBOX" left className="top-px left-0 h-[105px] w-[15px]" />
          <SideTab word="RESULTS" className="top-0 right-0 h-[104px] w-[17px]" />
        </div>
        <OperationList />
      </div>
    </main>
  )
}

/* ---------- task bar ---------- */

const apps = [
  ['Run', <><path d="M6 4h18l-3 17H3z" fill="#7fc0ea" stroke="#3d80b5" /><path d="M9 9h10l-1 8H8z" fill="#d6ecfa" stroke="#2f6a9c" /><path d="M0 8h5M0 12h4M0 16h3" stroke="#8ac6ee" /></>],
  ['Chrome', <><circle cx="12" cy="12" r="11" fill="#fbc116" /><path d="M12 12L2.500 6.500A11 11 0 0 1 21.500 6.500z" fill="#e33b2e" /><path d="M12 12L2.500 6.500A11 11 0 0 0 11 23l5-9z" fill="#2da94f" /><path d="M12 7h10l-.5-.5A11 11 0 0 0 4 4z" fill="#e33b2e" /><circle cx="12" cy="12" r="5" fill="#fff" /><circle cx="12" cy="12" r="4" fill="#3c7ff0" /></>],
  ['Explorer', <><path d="M1 2h9l2 2h11v17H1z" fill="#f7c244" /><path d="M1 6h22v15H1z" fill="#fcd975" /><path d="M5 13h14v9h-4v-4H9v4H5z" fill="#3a8ee0" /></>],
  ['Firefox', <><path d="M2 6l2-3 2 3c2-2 5-2 7-1l-1-4c3 1 5 3 6 5l3 1c2 4 2 9 0 11-3 5-9 7-14 4C1 19-1 12 2 6z" fill="#ff6a2a" /><path d="M12 1c7 2 11 7 10 13-1 5-5 9-10 9 6-3 8-9 5-14-2-3-5-4-5-8z" fill="#ffc42b" /><circle cx="12" cy="14" r="5" fill="#7a3bd0" /><path d="M3 7l4 3 6-1-3 4 2 4c-4 1-8-2-9-10z" fill="#f0343c" /></>],
  ['Thunderbird', <><circle cx="13" cy="12" r="10.500" fill="#1f69b8" /><path d="M4 3c8-4 18 0 19 8-4-5-10-7-19-3z" fill="#4aa0e8" /><path d="M1 12l14-3 2 9-8 4c-5-1-8-5-8-10z" fill="#eef3f8" /><path d="M1 12l9 4 5-7" stroke="#a9b8c6" /></>],
  ['Remote PC', <><path d="M7 2l14 3v12L8 13z" fill="#5ab2ee" stroke="#2f6a9c" /><path d="M1 18l8-3 11 3-7 4z" fill="#d5dade" stroke="#8a9298" strokeWidth=".6" /></>],
  ['TeamViewer', <><rect width="24" height="24" fill="#0e78d6" /><circle cx="12" cy="12" r="9.500" fill="#fff" /><path d="M4 12l5-4v3h6V8l5 4-5 4v-3H9v3z" fill="#0e78d6" /></>],
  ['LibreOffice', <><path d="M3 1h12l6 6v16H3z" fill="#fafafa" /><path d="M14 1h7v7z" fill="#555" /></>],
  ['DAEMON Tools', <><circle cx="12" cy="12" r="11" fill="#2f96e0" stroke="#d9e9f5" strokeWidth="1.500" /><path d="M14 3L7 13h4l-2 8 8-10h-5z" fill="#fff" /></>],
  ['Notepad', <><path d="M9 2l12 2-4 17-15-2z" fill="#7db8d6" stroke="#3c6d88" strokeWidth=".6" /><path d="M9 2l12 2-1 3L8 5z" fill="#d9e6ec" /><path d="M8 22l14-2-1-15-5 15z" fill="#e8e8e8" /></>],
  ['Notepad++', <><path d="M3 1h18v22H3z" fill="#f5f5f5" stroke="#9aa" /><path d="M3 13h18v10H3z" fill="#7fd321" /><path d="M7 8v5M10 8v5M10 8h4" stroke="#333" /><path d="M21 0l3 2-8 15-3 2v-4z" fill="#f0a020" /></>],
  ['FeatureCAM', <><rect width="24" height="24" fill="#fdeede" /><path d="M6 4c5 1 9-2 12 0v4c-3-2-5-1-6 0v3h5v3h-5v5l-4 3V9L6 7z" fill="#a8642a" /></>],
  ['CCleaner', <><path d="M23 5l-4 5c-4-4-9-2-9 2s5 6 9 2l4 5C14 27 3 21 4 12S15-3 23 5z" fill="#d8322c" /><path d="M14 1l-4 11" stroke="#3c78c0" strokeWidth="2.500" /><path d="M7 11l6 2 1 9-13-3z" fill="#f0d9a0" /></>],
  ['Edge', <><circle cx="12" cy="12" r="11" fill="#1b7fcf" /><path d="M1 11C3-2 22-2 23 10c0 5-7 7-9 4 3-6-6-9-13-3z" fill="#3fc0b8" /><path d="M9 11c-3 8 5 12 12 8-5 6-16 5-18-4 0-4 3-5 6-4z" fill="#0c4f96" /></>],
  ['SolidWorks', <><path d="M1 5l11-4 11 3v15l-11 4-11-4z" fill="#d2151b" /><path d="M1 5l11 4 11-5-11-3z" fill="#f06a5e" /><text x="2" y="18" fontSize="11" fontWeight="700" fontFamily="Liberation Sans" fill="#fff">SW</text></>],
  ['Shell', <><circle cx="12" cy="12" r="11.500" fill="#f08a1d" /><path d="M11 20C6 15 4 10 5 6M11.500 20C9 14 8 8 9 3M12.500 20c2-6 3-12 2-17M13 20c5-5 7-10 6-14" stroke="#fff" strokeWidth="1.800" /><path d="M8 20.500h8" stroke="#fff" strokeWidth="2" /></>]
]

function TaskBar() {
  return (
    <footer className="flex h-10 shrink-0 items-stretch bg-[linear-gradient(90deg,#1c1c1c_0%,#3e362b_20.5%,#3c352c_23%,#2a2a2b_26%,#3a3a3a_32%,#3c3a38_36%,#22242b_45%,#1c1e26_60%,#1b1b1b_68%)] font-['Open_Sans','Noto_Sans',sans-serif] text-[12px] text-white">
      <button aria-label="Start" className="flex w-12 items-center justify-center">
        <Svg s={16}><path d="M0 2.300l6.500-.9v6.100H0zM7.500 1.200L16 0v7.500H7.500zM0 8.500h6.500v6.100L0 13.700zM7.500 8.500H16V16l-8.500-1.200z" fill="#fff" /></Svg>
      </button>
      <label className="flex w-[344px] items-center gap-[11px] border border-[#5c5c5c] bg-[#323232] pl-[11px]">
        <Search size={17} strokeWidth={1.5} className="-scale-x-100" />
        <input type="text" aria-label="Search" placeholder="Въведете текст за търсене тук" className="min-w-0 flex-1 text-[14px] outline-none placeholder:text-[#d0d0d0]" />
      </label>
      <button aria-label="Task view" className="flex w-12 items-center justify-center">
        <Svg s={18}><path d="M2.500 1v3h9V1M2.500 17v-3h9v3M2.500 6.500h9v5h-9zM15.500 1v3M15.500 7v10" stroke="#fff" strokeWidth="1.300" /></Svg>
      </button>
      <div className="ml-[3px] flex gap-px">
        {apps.map(([name, art]) => (
          <button key={name} aria-label={name} className={clsx('flex w-12 items-center justify-center', name === 'FeatureCAM' && 'border-b-2 border-[#b9b4b8] bg-[#56565a]')}>
            <Svg s={24}>{art}</Svg>
          </button>
        ))}
      </div>
      <div className="ml-auto flex items-center">
        <button aria-label="Hidden icons" className="mr-[8px]"><ChevronUp size={16} strokeWidth={1.5} /></button>
        <Svg w={18} h={14}><path d="M5.500 4.500h10v7h-10z" stroke="#fff" /><path d="M7 6h7v4H7zM16 6h1v4h-1zM0 2h5v4H0zM2 6h1v4H2zM1 0h1v2H1zM3 0h1v2H3z" fill="#fff" /></Svg>
        <span className="ml-[8px]"><Svg s={16}><path d="M1 14A13 13 0 0 1 14 2M5 14a9 9 0 0 1 9-8M9 14a5 5 0 0 1 5-4" stroke="#ddd" /><circle cx="13" cy="13.500" r="1.500" fill="#fff" /></Svg></span>
        <span className="ml-[6px]"><Svg w={18} h={16}><path d="M1 6h3l4-4v12l-4-4H1zM10 6q1.500 2 0 4M12 4q3 4 0 8M14.500 2q4 6 0 12" stroke="#fff" /></Svg></span>
        <div className="ml-[9px] leading-[17px]"><div>ENG</div><div>INTL</div></div>
        <div className="ml-[8px] w-[64px] text-center leading-[17px] whitespace-nowrap"><div>9:39</div><div>22.3.2021 г.</div></div>
        <button aria-label="Notifications" className="ml-[13px]">
          <Svg w={26} h={28}><path d="M1 5h16v12H9l-4 4v-4H1z" fill="#fff" /><path d="M4 8.500h10M4 11.500h10M4 14.500h6" stroke="#222" /><circle cx="16.500" cy="19.500" r="8" fill="#333" stroke="#aaa" /><text x="16.500" y="23" textAnchor="middle" fontSize="10" fontWeight="700" fill="#fff">3</text></Svg>
        </button>
        <span className="mr-1 ml-[12px] h-10 w-px bg-[#6b6b6b]" />
      </div>
    </footer>
  )
}

export default function App() {
  return (
    <div className="relative flex h-screen flex-col overflow-hidden bg-[#e5e5e5] font-['Liberation_Sans',Arial,sans-serif] text-[11px] leading-[14px] text-[#1a1a1a]">
      <TitleBar />
      <Ribbon />
      <div className="flex min-h-0 flex-1">
        <PartView />
        <Workspace />
      </div>
      <section className="flex h-[86px] shrink-0 flex-col bg-[#f3f3f3] pt-[7px]">
        <p className="pl-[9px]">Select something, or click-and-drag a box selection</p>
        <div className="mt-[18px] flex items-start gap-[10px] pl-[11px]">
          <button aria-label="Properties" className="mt-px flex size-[26px] items-center justify-center bg-[#e5e5e5]">{mini.props}</button>
          <span>Properties</span>
        </div>
      </section>
      <TaskBar />
      <div className="pointer-events-none absolute right-[9px] bottom-[34px] left-[980px] h-[102px] border-[5px] border-[#ed1c24]" />
    </div>
  )
}
